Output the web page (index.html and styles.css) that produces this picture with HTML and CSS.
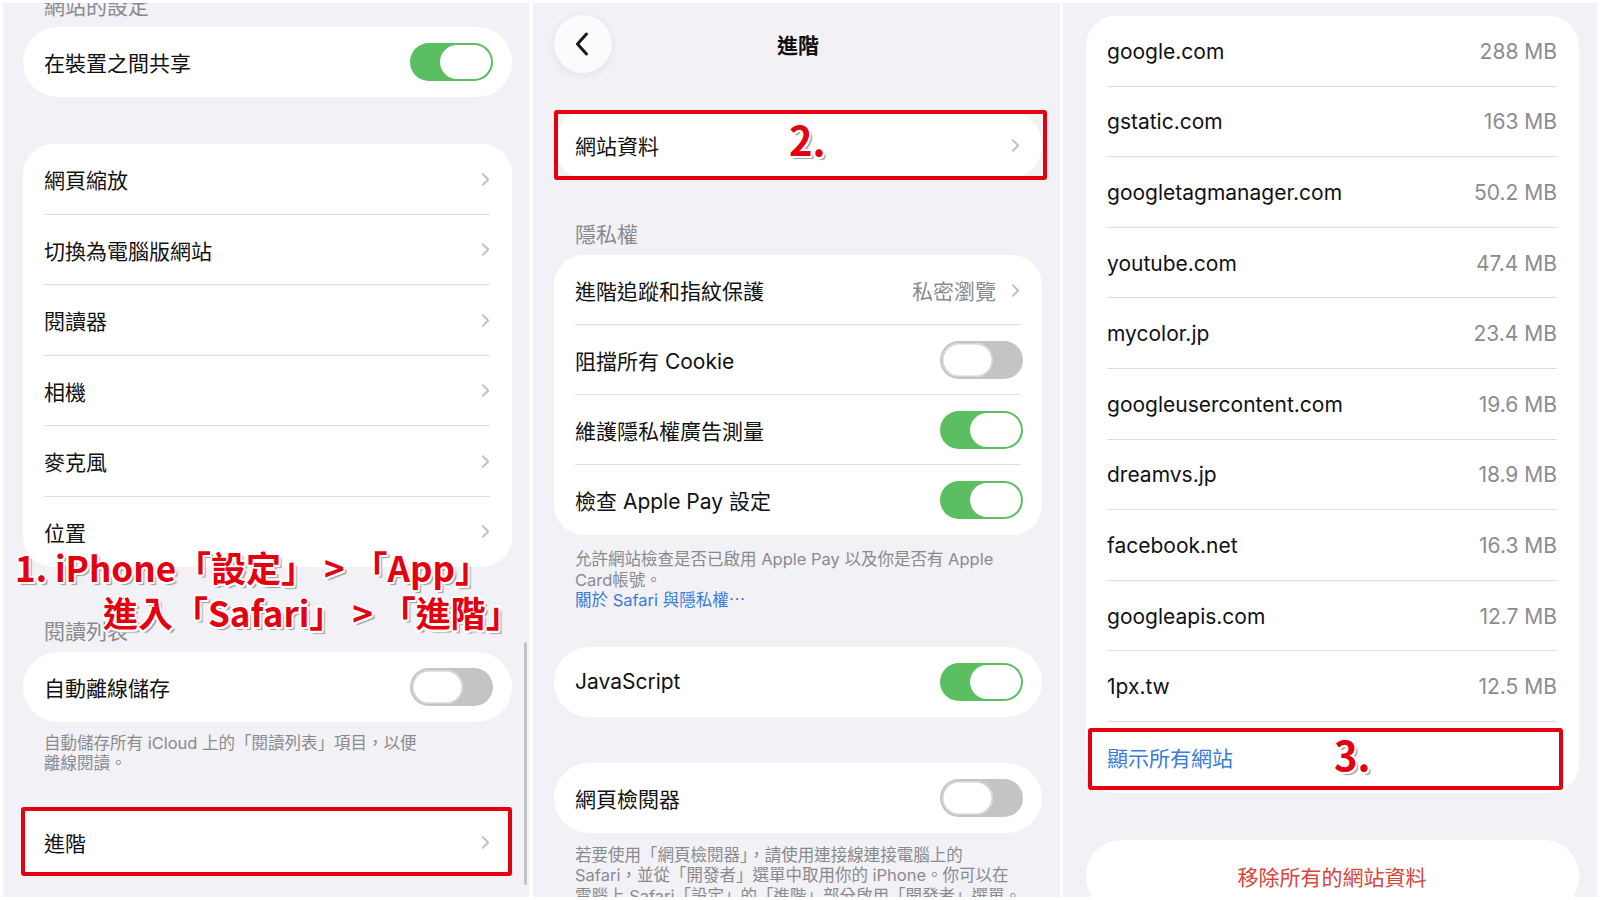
FILE: index.html
```html
<!DOCTYPE html>
<html lang="zh-Hant">
<head>
<meta charset="utf-8">
<title>Safari 網站資料</title>
<link rel="stylesheet" href="styles.css">
</head>
<body>
<div class="screens">

  <section class="panel p1">
    <div class="sec-head h-top">網站的設定</div>
    <div class="card single c-share">
      <div class="row"><span class="label">在裝置之間共享</span><span class="toggle on"></span></div>
    </div>

    <div class="card list l-web">
      <div class="row sep"><span class="label">網頁縮放</span><svg class="chev" viewBox="0 0 10 16"><path d="M2 2l6 6-6 6"/></svg></div>
      <div class="row sep"><span class="label">切換為電腦版網站</span><svg class="chev" viewBox="0 0 10 16"><path d="M2 2l6 6-6 6"/></svg></div>
      <div class="row sep"><span class="label">閱讀器</span><svg class="chev" viewBox="0 0 10 16"><path d="M2 2l6 6-6 6"/></svg></div>
      <div class="row sep"><span class="label">相機</span><svg class="chev" viewBox="0 0 10 16"><path d="M2 2l6 6-6 6"/></svg></div>
      <div class="row sep"><span class="label">麥克風</span><svg class="chev" viewBox="0 0 10 16"><path d="M2 2l6 6-6 6"/></svg></div>
      <div class="row"><span class="label">位置</span><svg class="chev" viewBox="0 0 10 16"><path d="M2 2l6 6-6 6"/></svg></div>
    </div>

    <div class="sec-head h-reading">閱讀列表</div>
    <div class="card single c-offline">
      <div class="row"><span class="label">自動離線儲存</span><span class="toggle off"></span></div>
    </div>
    <p class="foot f-offline">自動儲存所有 iCloud 上的「閱讀列表」項目，以便<br>離線閱讀。</p>

    <div class="card single boxed c-adv">
      <div class="row"><span class="label">進階</span><svg class="chev" viewBox="0 0 10 16"><path d="M2 2l6 6-6 6"/></svg></div>
      <span class="hl hl-adv"></span>
    </div>

    <div class="anno step1">
      <div class="l1">1. iPhone「設定」 &gt; 「App」</div>
      <div class="l2">進入「Safari」 &gt; 「進階」</div>
    </div>
    <span class="scrollbar"></span>
  </section>

  <section class="panel p2">
    <div class="nav">
      <span class="back"><svg viewBox="0 0 14 24"><path d="M11.5 2L2.5 12l9 10"/></svg></span>
      <span class="title">進階</span>
      <span class="nav-spacer"></span>
    </div>

    <div class="card single c-data">
      <div class="row"><span class="label">網站資料</span><svg class="chev" viewBox="0 0 10 16"><path d="M2 2l6 6-6 6"/></svg></div>
      <span class="hl hl-data"></span>
      <span class="anno num num2">2.</span>
    </div>

    <div class="sec-head h-privacy">隱私權</div>
    <div class="card list l-privacy">
      <div class="row sep"><span class="label">進階追蹤和指紋保護</span><span class="value">私密瀏覽</span><svg class="chev" viewBox="0 0 10 16"><path d="M2 2l6 6-6 6"/></svg></div>
      <div class="row sep"><span class="label">阻擋所有 Cookie</span><span class="toggle off"></span></div>
      <div class="row sep"><span class="label">維護隱私權廣告測量</span><span class="toggle on"></span></div>
      <div class="row"><span class="label">檢查 Apple Pay 設定</span><span class="toggle on"></span></div>
    </div>
    <p class="foot f-privacy">允許網站檢查是否已啟用 Apple Pay 以及你是否有 Apple<br>Card帳號。<br><span class="link">關於 Safari 與隱私權⋯</span></p>

    <div class="card single c-js">
      <div class="row"><span class="label">JavaScript</span><span class="toggle on"></span></div>
    </div>

    <div class="card single c-inspector">
      <div class="row"><span class="label">網頁檢閱器</span><span class="toggle off"></span></div>
    </div>
    <p class="foot f-inspector">若要使用「網頁檢閱器」，請使用連接線連接電腦上的<br>Safari，並從「開發者」選單中取用你的 iPhone。你可以在<br>電腦上 Safari「設定」的「進階」部分啟用「開發者」選單。</p>
  </section>

  <section class="panel p3">
    <div class="card list l-sites">
      <div class="row sep"><span class="label">google.com</span><span class="size">288 MB</span></div>
      <div class="row sep"><span class="label">gstatic.com</span><span class="size">163 MB</span></div>
      <div class="row sep"><span class="label">googletagmanager.com</span><span class="size">50.2 MB</span></div>
      <div class="row sep"><span class="label">youtube.com</span><span class="size">47.4 MB</span></div>
      <div class="row sep"><span class="label">mycolor.jp</span><span class="size">23.4 MB</span></div>
      <div class="row sep"><span class="label">googleusercontent.com</span><span class="size">19.6 MB</span></div>
      <div class="row sep"><span class="label">dreamvs.jp</span><span class="size">18.9 MB</span></div>
      <div class="row sep"><span class="label">facebook.net</span><span class="size">16.3 MB</span></div>
      <div class="row sep"><span class="label">googleapis.com</span><span class="size">12.7 MB</span></div>
      <div class="row sep"><span class="label">1px.tw</span><span class="size">12.5 MB</span></div>
      <div class="row show-all">
        <span class="label link">顯示所有網站</span>
        <span class="hl hl-all"></span>
        <span class="anno num num3">3.</span>
      </div>
    </div>

    <div class="card single c-remove">
      <div class="row center"><span class="label danger">移除所有的網站資料</span></div>
    </div>
  </section>

</div>
</body>
</html>
```

FILE: styles.css
```css
* { box-sizing: border-box; margin: 0; padding: 0; }

html, body { background: #ffffff; }

body {
  width: 1600px;
  height: 900px;
  overflow: hidden;
  font-family: Inter, "Noto Sans CJK TC", sans-serif;
  font-size: 21px;
  color: #111113;
}

.screens {
  display: flex;
  padding: 3px;
  height: 900px;
}

.panel {
  position: relative;
  flex: none;
  height: 894px;
  background: #f1f1f6;
  overflow: hidden;
  display: flex;
  flex-direction: column;
}

.p1 { width: 526px; padding-left: 20px; }
.p2 { width: 527px; margin-left: 4px; padding-left: 21px; }
.p3 { width: 534px; margin-left: 3px; padding-left: 23px; }

.p1 .card { width: 489px; }
.p2 .card { width: 488px; }
.p3 .card { width: 493px; }

/* section headers */
.sec-head {
  height: 24px;
  line-height: 24px;
  padding-left: 21px;
  font-size: 21px;
  color: #8a8a8e;
  font-family: "Noto Sans CJK TC", sans-serif;
}

.h-top { margin-top: -10px; }
.h-reading { margin-top: 51px; }
.h-privacy { margin-top: 41px; }

/* cards */
.card {
  position: relative;
  flex: none;
  background: #ffffff;
}

.card.single { border-radius: 35px; }
.card.list { border-radius: 30px; }
.card.boxed { border-radius: 4px; }

.row {
  position: relative;
  display: flex;
  align-items: center;
  height: 70px;
  padding: 0 22px 0 21px;
}

.l-web .row { height: 70.5px; }
.l-sites .row { height: 70.6px; }

.row.sep::after {
  content: "";
  position: absolute;
  left: 21px;
  right: 22px;
  bottom: 0;
  height: 1px;
  background: #dedee2;
}

.row.center { justify-content: center; }

.label {
  flex: 1;
  white-space: nowrap;
}

.value {
  color: #8a8a8e;
  margin-right: 15px;
}

.size {
  color: #8c8c90;
}

.chev {
  width: 9px;
  height: 15px;
  flex: none;
  fill: none;
  stroke: #bdbdc1;
  stroke-width: 2;
  stroke-linecap: round;
  stroke-linejoin: round;
}

/* toggles */
.toggle {
  position: relative;
  flex: none;
  width: 83px;
  height: 38px;
  border-radius: 19px;
  margin-right: -3px;
}

.toggle::after {
  content: "";
  position: absolute;
  top: 2px;
  width: 51px;
  height: 34px;
  border-radius: 17px;
  background: #ffffff;
}

.toggle.on { background: #5bbf61; }
.toggle.on::after { right: 2px; }

.toggle.off { background: #c4c4c7; }
.toggle.off::after { left: 2px; box-shadow: inset 0 0 0 1.5px #d2d2d5; }

/* footers */
.foot {
  padding-left: 21px;
  font-size: 16.5px;
  line-height: 20.5px;
  color: #8a8a8e;
  white-space: nowrap;
}

.link { color: #3a7bd5; }
.danger { flex: none; color: #d8453d; }

/* panel 1 spacing */
.c-share { margin-top: 10px; }
.l-web { margin-top: 47px; }
.c-offline { margin-top: 10px; }
.f-offline { margin-top: 11px; line-height: 20px; }
.c-adv { margin-top: 35px; height: 68px; }
.c-adv .row { height: 68px; }

/* panel 2 */
.nav {
  display: grid;
  grid-template-columns: 58px 1fr 58px;
  align-items: center;
  width: 488px;
  height: 58px;
  margin-top: 12px;
}

.back {
  width: 58px;
  height: 58px;
  border-radius: 50%;
  background: #fbfbfd;
  box-shadow: 0 2px 10px rgba(0, 0, 0, 0.07);
  display: flex;
  align-items: center;
  justify-content: center;
}

.back svg {
  width: 14px;
  height: 24px;
  fill: none;
  stroke: #1a1a1c;
  stroke-width: 3;
  stroke-linecap: round;
  stroke-linejoin: round;
  margin-left: -2px;
}

.title {
  text-align: center;
  font-family: "Noto Sans CJK TC", sans-serif;
  font-weight: 700;
  font-size: 21px;
}

.c-data { margin-top: 37px; }
.l-privacy { margin-top: 10px; }
.f-privacy { margin-top: 14px; }
.c-js { margin-top: 36px; }
.c-inspector { margin-top: 46px; }
.f-inspector { margin-top: 12px; }

/* panel 3 */
.l-sites { margin-top: 13px; border-radius: 28px; }
.c-remove { margin-top: 47px; height: 72px; border-radius: 30px; }
.c-remove .row { height: 72px; }

/* annotation overlays */
.hl {
  position: absolute;
  border: 4px solid #e4000f;
  border-radius: 3px;
  pointer-events: none;
}

.hl-adv { left: -2px; right: 0; top: -1px; bottom: 0; }
.hl-data { left: 0; right: -5px; top: 0; bottom: 0; }
.hl-all { left: 2px; right: 16px; top: 6px; bottom: 3px; }

.anno {
  font-family: "Noto Sans CJK TC", sans-serif;
  font-weight: 700;
  color: #e4000f;
  white-space: nowrap;
  text-shadow:
    -1.5px -1.5px 0 #fff, 1.5px -1.5px 0 #fff, -1.5px 1.5px 0 #fff, 1.5px 1.5px 0 #fff,
    0 -2px 0 #fff, 0 2px 0 #fff, -2px 0 0 #fff, 2px 0 0 #fff,
    3px 3px 1px #9c9c9c;
}

.step1 {
  position: absolute;
  left: 12px;
  top: 541px;
  font-size: 35px;
  line-height: 45px;
}

.step1 .l2 { padding-left: 88px; }

.num {
  position: absolute;
  font-size: 40px;
  line-height: 42px;
}

.num2 { left: 235px; top: 8px; }
.num3 { left: 248px; top: 11px; }

.scrollbar {
  position: absolute;
  right: 2px;
  top: 639px;
  width: 3px;
  height: 243px;
  border-radius: 2px;
  background: #c2c2c6;
}
```
